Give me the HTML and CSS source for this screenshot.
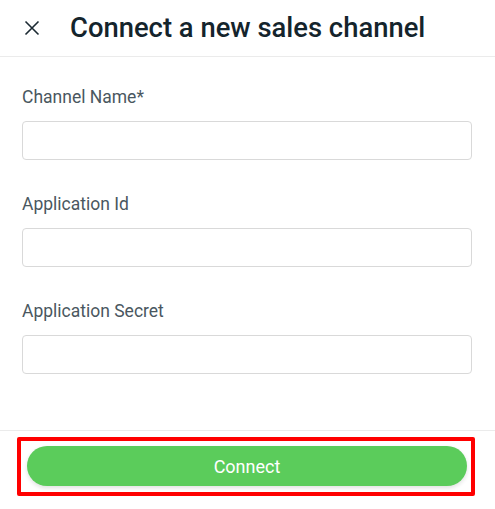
FILE: index.html
```html
<!DOCTYPE html>
<html lang="en">
<head>
    <meta charset="UTF-8">
    <meta name="viewport" content="width=device-width, initial-scale=1.0">
    <title>Connect a new sales channel</title>
    <link rel="stylesheet" href="styles.css">
</head>
<body>
    <div class="header">
        <button type="button" class="close" aria-label="Close">
            <svg width="16" height="16" viewBox="0 0 16 16">
                <path d="M1.5 1.5 L14.5 14.5 M14.5 1.5 L1.5 14.5" stroke="#1c2a33" stroke-width="1.6" fill="none"/>
            </svg>
        </button>
        <h1>Connect a new sales channel</h1>
    </div>
    <form class="form" id="channelForm">
        <div class="form-group">
            <label for="channelName">Channel Name*</label>
            <input type="text" id="channelName" required>
        </div>
        <div class="form-group">
            <label for="appId">Application Id</label>
            <input type="text" id="appId">
        </div>
        <div class="form-group">
            <label for="appSecret">Application Secret</label>
            <input type="text" id="appSecret">
        </div>
    </form>
    <div class="footer">
        <div class="highlight">
            <button type="submit" form="channelForm" class="connect">Connect</button>
        </div>
    </div>
</body>
</html>
```

FILE: styles.css
```css
body {
    font-family: Roboto, 'Liberation Sans', sans-serif;
    background-color: #fff;
    margin: 0;
    width: 495px;
}
.header {
    display: flex;
    align-items: center;
    height: 56px;
    border-bottom: 1px solid #ebebeb;
}
.close {
    display: flex;
    align-items: center;
    justify-content: center;
    width: 16px;
    height: 16px;
    margin-left: 24px;
    margin-right: 30px;
    padding: 0;
    border: none;
    background: none;
    cursor: pointer;
}
h1 {
    margin: 0;
    font-size: 27.4px;
    font-weight: 500;
    color: #14242c;
}
.form {
    padding: 30px 23px 0 22px;
    height: 343px;
}
.form-group {
    margin-bottom: 34px;
}
label {
    display: block;
    font-size: 17.5px;
    line-height: 20px;
    color: #4a5760;
    margin-bottom: 14px;
}
input {
    display: block;
    box-sizing: border-box;
    width: 100%;
    height: 39px;
    padding: 0 12px;
    border: 1px solid #d9d9d9;
    border-radius: 4px;
    font-family: inherit;
    font-size: 16px;
}
input:focus {
    border-color: #5bcc5b;
    outline: none;
}
.footer {
    border-top: 1px solid #ebebeb;
    padding-top: 6px;
}
.highlight {
    box-sizing: border-box;
    width: 458px;
    margin-left: 17px;
    padding: 5px 4px 6px 6px;
    border: 4px solid #ff0000;
    border-radius: 2px;
}
.connect {
    display: block;
    width: 440px;
    height: 40px;
    background-color: #5bcc5b;
    color: #fff;
    border: none;
    border-radius: 20px;
    box-shadow: 0 2px 4px rgba(0, 0, 0, 0.12);
    font-family: inherit;
    font-size: 18px;
    cursor: pointer;
}
.connect:hover {
    background-color: #4fbf4f;
}
```
